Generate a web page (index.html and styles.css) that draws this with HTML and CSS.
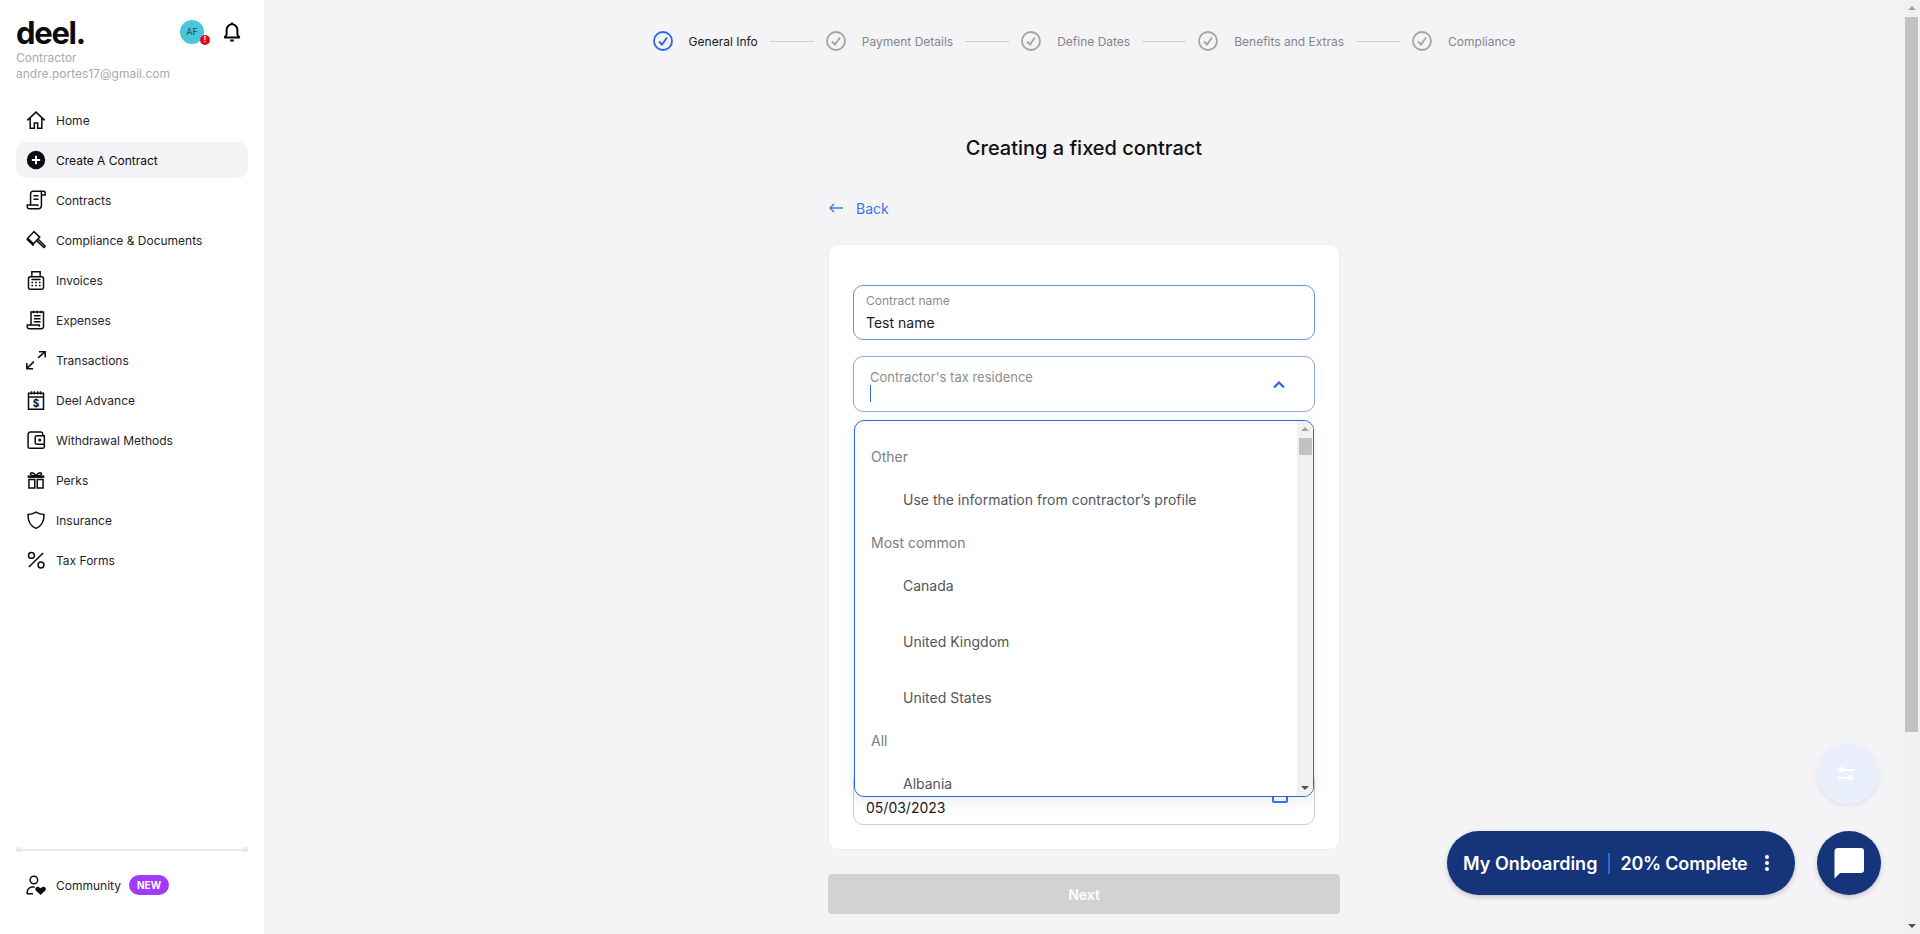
FILE: index.html
```html
<!DOCTYPE html>
<html lang="en">
<head>
    <meta charset="UTF-8">
    <meta name="viewport" content="width=device-width, initial-scale=1.0">
    <title>Creating a fixed contract</title>
    <link rel="stylesheet" href="styles.css">
</head>
<body>
    <aside class="sidebar">
        <div class="brand-row">
            <span class="logo">deel.</span>
            <div class="account">
                <div class="avatar">AF<span class="avatar-badge">!</span></div>
                <svg class="bell" viewBox="0 0 20 24" width="18" height="22"><path d="M2 18h16l-2-3v-5.500a6 6 0 0 0-12 0V15z"/><path d="M10 1.500v2.500M8 21.500h4"/></svg>
            </div>
        </div>
        <div class="user-meta">Contractor</div>
        <div class="user-meta">andre.portes17@gmail.com</div>

        <nav class="nav">
            <a class="nav-item">
                <svg class="nav-icon" viewBox="0 0 24 24"><path d="M1.500 12.500 12 2.500l10.500 10M5 9.500V22h5v-6.500h4V22h5V9.500"/></svg>
                Home
            </a>
            <a class="nav-item active">
                <svg class="nav-icon" viewBox="0 0 24 24"><circle class="solid" cx="12" cy="12" r="11"/><path class="plus" d="M12 7v10M7 12h10"/></svg>
                Create A Contract
            </a>
            <a class="nav-item">
                <svg class="nav-icon" viewBox="0 0 24 24"><path d="M5.500 18V4.500a3 3 0 0 1 3-3H21a2 2 0 0 1 2 2V6h-4M18.500 2.500V19a3.500 3.500 0 0 1-3.500 3.500H4A2.500 2.500 0 0 1 1.500 20v-2H14v1.500M9 7h6M9 11h6"/></svg>
                Contracts
            </a>
            <a class="nav-item">
                <svg class="nav-icon" viewBox="0 0 24 24"><path d="M9.500 2 2 10l7 6.500 7.500-8zM13 13l8.500 8 1.500-1.500-8-8M2 10l-.5 1.500 7 6.500 1-1.500"/></svg>
                Compliance &amp; Documents
            </a>
            <a class="nav-item">
                <svg class="nav-icon" viewBox="0 0 24 24"><path d="M7 8V2h10v6M5 8h14a2 2 0 0 1 2 2v11a2 2 0 0 1-2 2H5a2 2 0 0 1-2-2V10a2 2 0 0 1 2-2zM6.500 11.500h11M6.500 15h2M11 15h2M15.500 15h2M6.500 18.500h2M11 18.500h2M15.500 18.500h2"/></svg>
                Invoices
            </a>
            <a class="nav-item">
                <svg class="nav-icon" viewBox="0 0 24 24"><path d="M6 18V2.500h15V20a2.500 2.500 0 0 1-2.500 2.500H4A2.500 2.500 0 0 1 1.500 20v-2H16v2M9.500 7h8M9.500 10.500h8M9.500 14h8M9 1v3M13.500 1v3M18 1v3"/></svg>
                Expenses
            </a>
            <a class="nav-item">
                <svg class="nav-icon" viewBox="0 0 24 24"><path d="M1 22 9.500 14M1 15.500V22.500h7.500M14.500 9.500 23 2M15.500 2H23v7"/></svg>
                Transactions
            </a>
            <a class="nav-item">
                <svg class="nav-icon" viewBox="0 0 24 24"><path d="M3 4h18v19H3zM3 8.500h18M6.500 1.500v4M10 1.500v4M14 1.500v4M17.500 1.500v4"/><text class="dollar" x="12" y="20.500">$</text></svg>
                Deel Advance
            </a>
            <a class="nav-item">
                <svg class="nav-icon" viewBox="0 0 24 24"><path d="M20 7V4.500A2 2 0 0 0 18 2.500H5A2.500 2.500 0 0 0 2.500 5v15A2 2 0 0 0 4.500 22H20a2 2 0 0 0 2-2V7H13a2 2 0 0 0-2 2v6a2 2 0 0 0 2 2h9"/><circle class="solid" cx="16.500" cy="12" r="1.800"/></svg>
                Withdrawal Methods
            </a>
            <a class="nav-item">
                <svg class="nav-icon" viewBox="0 0 24 24"><path class="heavy" d="M2 8h20"/><path d="M3.500 11.500h7v10h-7zM13.500 11.500h7v10h-7zM12 7C9 2 5 2.500 5.500 5c.3 1.500 3 2 6.500 2zM12 7c3-5 7-4.500 6.500-2-.3 1.500-3 2-6.500 2z"/></svg>
                Perks
            </a>
            <a class="nav-item">
                <svg class="nav-icon" viewBox="0 0 24 24"><path d="M12 2.500c3 1.800 6 2.800 9.500 3 .5 8-2.500 13.500-9.500 16.500C5 19 2 13.500 2.500 5.500c3.500-.2 6.500-1.200 9.500-3z"/></svg>
                Insurance
            </a>
            <a class="nav-item">
                <svg class="nav-icon" viewBox="0 0 24 24"><circle cx="6.500" cy="6.500" r="3.500"/><circle cx="18" cy="18" r="3.500"/><path d="M20.500 3.500 3.500 20.500"/></svg>
                Tax Forms
            </a>
        </nav>

        <div class="sidebar-footer">
            <div class="divider"></div>
            <a class="nav-item">
                <svg class="nav-icon" viewBox="0 0 24 24"><circle cx="9.500" cy="6" r="4.500"/><path d="M1.500 23v-2.500A6 6 0 0 1 7.500 14.500h3M1.500 22.500h7"/><path class="solid" d="M17.500 24l-5.700-5.500c-2-2.200.8-5.500 3.500-4l2.200 1.500 2.200-1.500c2.700-1.500 5.500 1.800 3.500 4z"/></svg>
                Community
                <span class="new-badge">NEW</span>
            </a>
        </div>
    </aside>

    <main class="main">
        <ol class="stepper">
            <li class="step current">
                <svg class="step-icon" viewBox="0 0 20 20"><circle cx="10" cy="10" r="9"/><path d="m6 10.500 3 3 5-7"/></svg>
                General Info
            </li>
            <li class="step-line"></li>
            <li class="step">
                <svg class="step-icon" viewBox="0 0 20 20"><circle cx="10" cy="10" r="9"/><path d="m6 10.500 3 3 5-7"/></svg>
                Payment Details
            </li>
            <li class="step-line"></li>
            <li class="step">
                <svg class="step-icon" viewBox="0 0 20 20"><circle cx="10" cy="10" r="9"/><path d="m6 10.500 3 3 5-7"/></svg>
                Define Dates
            </li>
            <li class="step-line"></li>
            <li class="step">
                <svg class="step-icon" viewBox="0 0 20 20"><circle cx="10" cy="10" r="9"/><path d="m6 10.500 3 3 5-7"/></svg>
                Benefits and Extras
            </li>
            <li class="step-line"></li>
            <li class="step">
                <svg class="step-icon" viewBox="0 0 20 20"><circle cx="10" cy="10" r="9"/><path d="m6 10.500 3 3 5-7"/></svg>
                Compliance
            </li>
        </ol>

        <h1 class="title">Creating a fixed contract</h1>

        <div class="column">
            <a class="back">
                <svg viewBox="0 0 14 10" width="14" height="10"><path d="M14 5H1M5 1 1 5l4 4"/></svg>
                Back
            </a>

            <form class="card">
                <div class="field focused">
                    <span class="field-label">Contract name</span>
                    <span class="field-value">Test name</span>
                </div>

                <div class="field select-field">
                    <div>
                        <span class="field-label">Contractor's tax residence</span>
                        <span class="caret"></span>
                    </div>
                    <svg class="chevron" viewBox="0 0 12 8" width="12" height="8"><path d="m1 6.500 5-5 5 5"/></svg>
                </div>

                <div class="hidden-fields"></div>

                <div class="field date-field">
                    <span class="field-label">&nbsp;</span>
                    <span class="field-value">05/03/2023</span>
                    <span class="date-icon"></span>
                </div>

                <div class="dropdown">
                    <div class="dropdown-list">
                        <div class="group-label">Other</div>
                        <div class="option">Use the information from contractor’s profile</div>
                        <div class="group-label">Most common</div>
                        <div class="option">Canada</div>
                        <div class="option">United Kingdom</div>
                        <div class="option">United States</div>
                        <div class="group-label">All</div>
                        <div class="option">Albania</div>
                    </div>
                    <div class="scrollbar small">
                        <span class="arrow-up"></span>
                        <span class="thumb"></span>
                        <span class="arrow-down"></span>
                    </div>
                </div>
            </form>

            <button class="next" type="button">Next</button>
        </div>

        <button class="fab-settings" type="button">
            <svg viewBox="0 0 16 16" width="16" height="16"><path d="M0 4h16M0 12h16"/><path class="ticks" d="M4 1v6M12 9v6"/></svg>
        </button>
        <div class="fab-row">
            <div class="onboarding">
                My Onboarding
                <span class="onboarding-sep"></span>
                <span class="onboarding-percent">20% Complete</span>
                <span class="onboarding-dots"><i></i><i></i><i></i></span>
            </div>
            <button class="chat" type="button">
                <svg viewBox="0 0 32 32" width="32" height="32"><path d="M4 1h24a3 3 0 0 1 3 3v19a3 3 0 0 1-3 3H7l-5.500 5.500V4A3 3 0 0 1 4 1z"/></svg>
            </button>
        </div>
    </main>

    <div class="scrollbar page-scroll">
        <span class="arrow-up"></span>
        <span class="thumb"></span>
        <span class="arrow-down"></span>
    </div>
</body>
</html>
```

FILE: styles.css
```css
* {
    box-sizing: border-box;
}
html, body {
    height: 100%;
    overflow: hidden;
}
body {
    margin: 0;
    display: flex;
    font-family: Inter, "Liberation Sans", sans-serif;
    background-color: #f4f4f6;
    color: #111;
}

/* Sidebar */
.sidebar {
    width: 264px;
    flex-shrink: 0;
    background-color: white;
    display: flex;
    flex-direction: column;
    padding: 20px 16px 31px;
}
.brand-row {
    display: flex;
    justify-content: space-between;
    align-items: center;
    height: 24px;
    margin-bottom: 6px;
    padding-right: 7px;
}
.logo {
    padding-top: 1px;
    font-size: 31px;
    font-weight: 700;
    line-height: 24px;
    letter-spacing: -1.300px;
    color: #0b0b10;
}
.account {
    display: flex;
    align-items: center;
    gap: 19px;
}
.avatar {
    position: relative;
    width: 24px;
    height: 24px;
    border-radius: 50%;
    background-color: #4bc6d6;
    color: #1f4658;
    font-size: 9px;
    line-height: 24px;
    text-align: center;
}
.avatar-badge {
    position: absolute;
    right: -6px;
    bottom: -1px;
    width: 10px;
    height: 10px;
    border-radius: 50%;
    background-color: #e30b17;
    color: white;
    font-size: 7px;
    font-weight: 700;
    line-height: 10px;
}
.bell {
    fill: none;
    stroke: black;
    stroke-width: 2.200;
    stroke-linejoin: round;
}
.user-meta {
    font-size: 12px;
    line-height: 16px;
    color: #a9a9b1;
}
.nav {
    display: flex;
    flex-direction: column;
    gap: 4px;
    margin-top: 20px;
}
.nav-item {
    display: flex;
    align-items: center;
    gap: 10px;
    height: 36px;
    padding-left: 10px;
    border-radius: 10px;
    font-size: 12px;
    color: #24242c;
}
.nav-item.active {
    background-color: #f3f3f5;
    color: #0b0b10;
}
.nav-icon {
    width: 20px;
    height: 20px;
    flex-shrink: 0;
    fill: none;
    stroke: #0b0b10;
    stroke-width: 1.800;
}
.nav-icon .solid {
    fill: #0b0b10;
    stroke: none;
}
.nav-icon .plus {
    stroke: white;
    stroke-width: 2.200;
}
.nav-icon .heavy {
    stroke-width: 3;
}
.nav-icon .dollar {
    fill: #0b0b10;
    stroke: none;
    font-size: 12px;
    font-weight: 700;
    text-anchor: middle;
}
.sidebar-footer {
    margin-top: auto;
}
.divider {
    position: relative;
    height: 2px;
    margin-bottom: 16px;
    background-color: #e9ebf3;
}
.divider::before, .divider::after {
    content: "";
    position: absolute;
    top: -2px;
    width: 5px;
    height: 5px;
    border-radius: 50%;
    background-color: #e4e7f0;
}
.divider::before {
    left: 0;
}
.divider::after {
    right: 0;
}
.new-badge {
    height: 20px;
    margin-left: -2px;
    padding: 0 8px;
    border-radius: 10px;
    background-color: #a03cf6;
    color: white;
    font-size: 10px;
    font-weight: 700;
    line-height: 20px;
}

/* Main area */
.main {
    position: relative;
    flex-grow: 1;
    display: flex;
    flex-direction: column;
    align-items: center;
    padding: 31px 0 0 1px;
}
.stepper {
    display: flex;
    align-items: center;
    gap: 12px;
    margin: 0;
    padding: 0;
    list-style: none;
}
.step {
    display: flex;
    align-items: center;
    gap: 16px;
    height: 20px;
    font-size: 12px;
    color: #85858c;
}
.step.current {
    color: #1a1a22;
}
.step-icon {
    width: 20px;
    height: 20px;
    fill: none;
    stroke: #a3a3a8;
    stroke-width: 1.800;
}
.current .step-icon {
    stroke: #2a66ea;
}
.step-line {
    width: 44px;
    height: 1px;
    background-color: #cfcfd3;
}
.title {
    margin: 83px 0 0;
    font-size: 20px;
    font-weight: 500;
    line-height: 28px;
}
.column {
    width: 512px;
    display: flex;
    flex-direction: column;
}
.back {
    display: flex;
    align-items: center;
    gap: 13px;
    height: 20px;
    margin: 36px 0 26px 1px;
    font-size: 14px;
    color: #3f73ee;
}
.back svg {
    fill: none;
    stroke: #3f73ee;
    stroke-width: 1.300;
}
.card {
    position: relative;
    height: 606px;
    padding: 40px 24px 0;
    display: flex;
    flex-direction: column;
    gap: 16px;
    background-color: white;
    border: 1px solid #ededf0;
    border-radius: 10px;
}
.field {
    position: relative;
    height: 55px;
    flex-shrink: 0;
    padding: 7px 12px 0;
    border: 1px solid #cfcfd3;
    border-radius: 10px;
}
.field.focused {
    border-color: #6d92dd;
}
.field-label {
    display: block;
    font-size: 12px;
    line-height: 16px;
    color: #8c8c92;
}
.field-value {
    display: block;
    margin-top: 5px;
    font-size: 14px;
    line-height: 18px;
    color: #1a1a22;
}
.select-field {
    height: 56px;
    padding: 12px 29px 0 16px;
    border-color: #8daae4;
    display: flex;
    justify-content: space-between;
}
.select-field .field-label {
    font-size: 13px;
}
.caret {
    display: block;
    width: 1px;
    height: 17px;
    background-color: #2a66ea;
}
.chevron {
    margin-top: 12px;
    fill: none;
    stroke: #2a66ea;
    stroke-width: 2.200;
}
.hidden-fields {
    height: 326px;
    flex-shrink: 0;
}
.date-icon {
    position: absolute;
    right: 26px;
    top: 10px;
    width: 16px;
    height: 22px;
    border: 2px solid #3f73ee;
    border-radius: 2px;
}

/* Open country list, lies over the rest of the form */
.dropdown {
    position: absolute;
    top: 175px;
    left: 25px;
    width: 460px;
    height: 377px;
    display: flex;
    overflow: hidden;
    background-color: white;
    border: 1px solid #2a66ea;
    border-radius: 10px;
    box-shadow: 0 4px 14px rgba(0, 0, 0, 0.08);
}
.dropdown-list {
    flex-grow: 1;
    padding-top: 21px;
    overflow: hidden;
    font-size: 14px;
}
.group-label {
    height: 30px;
    padding-left: 16px;
    line-height: 30px;
    color: #7c7c82;
}
.option {
    height: 56px;
    padding-left: 48px;
    line-height: 56px;
    color: #55555b;
}

/* Scrollbars */
.scrollbar {
    width: 17px;
    flex-shrink: 0;
    display: flex;
    flex-direction: column;
    align-items: center;
    background-color: #f1f1f1;
}
.scrollbar.small {
    width: 16px;
}
.arrow-up, .arrow-down {
    width: 0;
    height: 0;
    border-left: 4px solid transparent;
    border-right: 4px solid transparent;
}
.arrow-up {
    margin: 6px 0 5px;
    border-bottom: 4px solid #a3a3a3;
}
.arrow-down {
    margin: auto 0 6px;
    border-top: 4px solid #505050;
}
.thumb {
    width: 13px;
    height: 17px;
    background-color: #c1c1c1;
}
.page-scroll .thumb {
    height: 715px;
    margin-top: 2px;
}
.small .arrow-up {
    margin-bottom: 7px;
}

/* Next button */
.next {
    height: 40px;
    margin-top: 24px;
    border: none;
    border-radius: 4px;
    background-color: #d1d2d4;
    color: white;
    font-family: inherit;
    font-size: 14px;
    font-weight: 600;
}

/* Floating buttons */
.fab-settings {
    position: absolute;
    right: 25px;
    bottom: 130px;
    width: 60px;
    height: 60px;
    border: none;
    border-radius: 50%;
    background-color: #e9f0fc;
    box-shadow: 0 2px 6px rgba(0, 0, 0, 0.08);
}
.fab-settings svg {
    display: block;
    margin: 0 0 0 14px;
    fill: none;
    stroke: white;
    stroke-width: 2;
}
.fab-settings .ticks {
    stroke-width: 3;
}
.fab-row {
    position: absolute;
    right: 22px;
    bottom: 39px;
    display: flex;
    gap: 22px;
}
.onboarding {
    display: flex;
    align-items: center;
    width: 348px;
    height: 64px;
    padding-left: 16px;
    border-radius: 32px;
    background-color: #15347a;
    color: white;
    font-size: 18px;
    font-weight: 600;
    box-shadow: 0 2px 5px rgba(0, 0, 0, 0.2);
}
.onboarding-sep {
    width: 2px;
    height: 21px;
    margin: 0 10px 0 11px;
    background-color: #2d68e6;
}
.onboarding-percent {
    letter-spacing: -0.2px;
}
.onboarding-dots {
    display: flex;
    flex-direction: column;
    gap: 2px;
    margin: 0 26px 0 auto;
}
.onboarding-dots i {
    width: 4px;
    height: 4px;
    border-radius: 50%;
    background-color: white;
}
.chat {
    width: 64px;
    height: 64px;
    padding: 0;
    border: none;
    border-radius: 50%;
    background-color: #15347a;
    box-shadow: 0 2px 5px rgba(0, 0, 0, 0.2);
}
.chat svg {
    display: block;
    margin: 16px;
    fill: white;
}
```
